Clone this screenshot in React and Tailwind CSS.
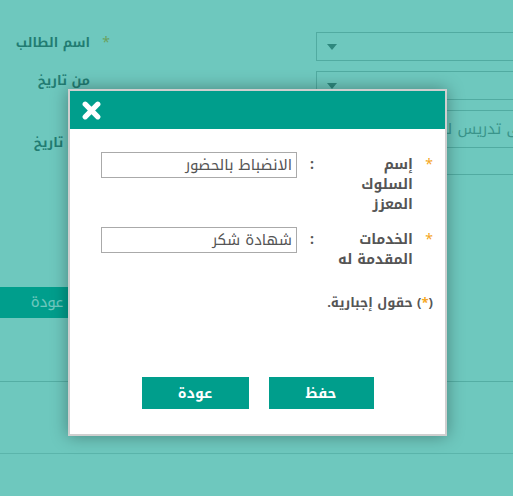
import React from "react";

function Caret() {
  return (
    <svg width="10" height="6" viewBox="0 0 10 6" className="ml-[10px]">
      <path d="M0 0 L10 0 L5 6 Z" fill="#6b6b6b" />
    </svg>
  );
}

function CloseX() {
  return (
    <svg width="19" height="19" viewBox="0 0 19 19">
      <path d="M3.2 3.2 L15.8 15.8 M15.8 3.2 L3.2 15.8" stroke="white" strokeWidth="5.2" strokeLinecap="round" fill="none" />
    </svg>
  );
}

export default function App() {
  const font = "font-['Noto_Kufi_Arabic','Noto_Sans_Arabic','DejaVu_Sans',sans-serif]";
  return (
    <div className={`relative w-[513px] h-[496px] overflow-hidden bg-white ${font}`}>
      {/* background page */}
      <div className="flex">
        <div className="w-[316px] shrink-0">
          <div dir="rtl" className="w-[110px] mt-[33px] flex items-center h-[20px]">
            <span className="w-[9px] text-[14px] text-[#f5a623] leading-[20px]">*</span>
            <span className="mr-[11px] text-[13px] font-bold text-[#505050] leading-[20px] whitespace-nowrap">اسم الطالب</span>
          </div>
          <div dir="rtl" className="w-[90px] mt-[18px] h-[20px] text-[13px] font-bold text-[#505050] leading-[20px] whitespace-nowrap">
            من تاريخ
          </div>
          <div dir="rtl" className="w-[90px] mt-[42px] h-[20px] text-[13px] font-bold text-[#505050] leading-[20px] whitespace-nowrap">
            إلى تاريخ
          </div>
        </div>
        <div className="w-[400px] shrink-0">
          <div className="mt-[32px] h-[29px] border border-[#bdbdbd] flex items-center">
            <Caret />
          </div>
          <div className="mt-[10px] h-[29px] border border-[#bdbdbd] flex items-center">
            <Caret />
          </div>
          <div className="mt-[10px] h-[38px] border border-[#bdbdbd] flex items-center pl-[128px]">
            <span dir="rtl" className="text-[15px] text-[#888] whitespace-nowrap">إضافة ملاحظات على تدريس لـ</span>
          </div>
          <div className="h-[27px] border border-t-0 border-[#bdbdbd]"></div>
        </div>
      </div>
      <div className="mt-[112px] w-[94px] h-[31px] bg-[#009e8c] flex items-center justify-center text-white text-[15px]">
        عودة
      </div>
      <div className="h-[64px] border-b border-[#c4c4c4]"></div>
      <div className="h-[72px] border-b border-[#d4d4d4]"></div>

      {/* overlay */}
      <div className="absolute inset-0 bg-[rgba(0,158,140,0.57)]"></div>

      {/* dialog */}
      <div className="absolute left-[68px] top-[89px] w-[379px] h-[347px] bg-white border-2 border-[#cfcfcf] shadow-[0_0_16px_rgba(0,0,0,0.35)] flex flex-col">
        <div className="h-[38px] bg-[#009e8c] flex items-center pl-[12px] shrink-0">
          <CloseX />
        </div>
        <div dir="rtl" className="flex-1 pr-[12px] pt-[23px] text-[#555]">
          <div className="flex items-start">
            <span className="w-[16px] mt-[3px] leading-[20px] text-[14px] text-[#f5a623] text-right">*</span>
            <span className="w-[86px] mt-[3px] pr-[4px] leading-[20px] text-[14px] font-bold">
              إسم<br />السلوك<br />المعزز
            </span>
            <span className="w-[34px] mt-[3px] leading-[20px] text-[14px] font-bold text-left pl-[13px]">:</span>
            <div className="w-[196px] h-[26px] border border-[#aaa] flex items-center pr-[4px] text-[15px] text-[#555] whitespace-nowrap">
              الانضباط بالحضور
            </div>
          </div>
          <div className="flex items-start mt-[12px]">
            <span className="w-[16px] mt-[3px] leading-[20px] text-[14px] text-[#f5a623] text-right">*</span>
            <span className="w-[86px] mt-[3px] pr-[4px] leading-[20px] text-[14px] font-bold whitespace-nowrap">
              الخدمات<br />المقدمة له
            </span>
            <span className="w-[34px] mt-[3px] leading-[20px] text-[14px] font-bold text-left pl-[13px]">:</span>
            <div className="w-[196px] h-[26px] border border-[#aaa] flex items-center pr-[4px] text-[15px] text-[#555] whitespace-nowrap">
              شهادة شكر
            </div>
          </div>
          <div className="mt-[23px] leading-[20px] text-[13px] font-bold">
            (<span className="text-[#f5a623]">*</span>) حقول إجبارية.
          </div>
          <div className="mt-[64px] flex justify-center gap-[20px] pl-[12px]">
            <button className="w-[105px] h-[32px] bg-[#009e8c] text-white text-[14px] font-bold">حفظ</button>
            <button className="w-[107px] h-[32px] bg-[#009e8c] text-white text-[14px] font-bold">عودة</button>
          </div>
        </div>
      </div>
    </div>
  );
}
